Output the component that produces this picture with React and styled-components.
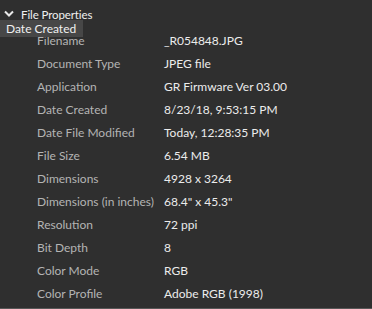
import React from "react";
import styled, { createGlobalStyle } from "styled-components";

const GlobalStyle = createGlobalStyle`
  body {
    margin: 0;
    background: #2f2f2f;
    font-family: Lato, "Open Sans", sans-serif;
  }
`;

const rows = [
  ["Filename", "_R054848.JPG"],
  ["Document Type", "JPEG file"],
  ["Application", "GR Firmware Ver 03.00"],
  ["Date Created", "8/23/18, 9:53:15 PM"],
  ["Date File Modified", "Today, 12:28:35 PM"],
  ["File Size", "6.54 MB"],
  ["Dimensions", "4928 x 3264"],
  ["Dimensions (in inches)", "68.4\" x 45.3\""],
  ["Resolution", "72 ppi"],
  ["Bit Depth", "8"],
  ["Color Mode", "RGB"],
  ["Color Profile", "Adobe RGB (1998)"],
];

export default function App() {
  return (
    <Panel>
      <GlobalStyle />
      <Header>
        <Chevron viewBox="0 0 10 8">
          <path d="M1 1.5 L5 5.5 L9 1.5" fill="none" stroke="#e8e8e8" strokeWidth="2" />
        </Chevron>
        <Title>File Properties</Title>
      </Header>
      <Tooltip>Date Created</Tooltip>
      <List>
        {rows.map(([label, value]) => (
          <Row key={label}>
            <Label>{label}</Label>
            <Value>{value}</Value>
          </Row>
        ))}
      </List>
      <Divider />
    </Panel>
  );
}

const Panel = styled.div`
  position: relative;
  width: 372px;
  height: 309px;
  background: #2f2f2f;
  overflow: hidden;
`;

const Header = styled.div`
  display: flex;
  align-items: center;
  gap: 7px;
  height: 26px;
  padding: 2px 0 0 4px;
  box-sizing: border-box;
`;

const Chevron = styled.svg`
  width: 10px;
  height: 8px;
`;

const Title = styled.span`
  color: #f0f0f0;
  font-size: 11.5px;
  letter-spacing: -0.1px;
`;

const Tooltip = styled.div`
  position: absolute;
  left: 0;
  top: 20px;
  height: 17px;
  padding: 0 7px 0 6px;
  background: #474747;
  color: #f0f0f0;
  font-size: 12px;
  line-height: 17px;
`;

const List = styled.div`
  display: flex;
  flex-direction: column;
  padding-left: 37px;
  margin-top: 3px;
`;

const Row = styled.div`
  display: grid;
  grid-template-columns: 127px 1fr;
  height: 23px;
  align-items: center;
  font-size: 12px;
`;

const Label = styled.span`
  color: #b4b4b4;
`;

const Value = styled.span`
  color: #ececec;
`;

const Divider = styled.div`
  margin-top: 3px;
  height: 1px;
  background: #575757;
`;
